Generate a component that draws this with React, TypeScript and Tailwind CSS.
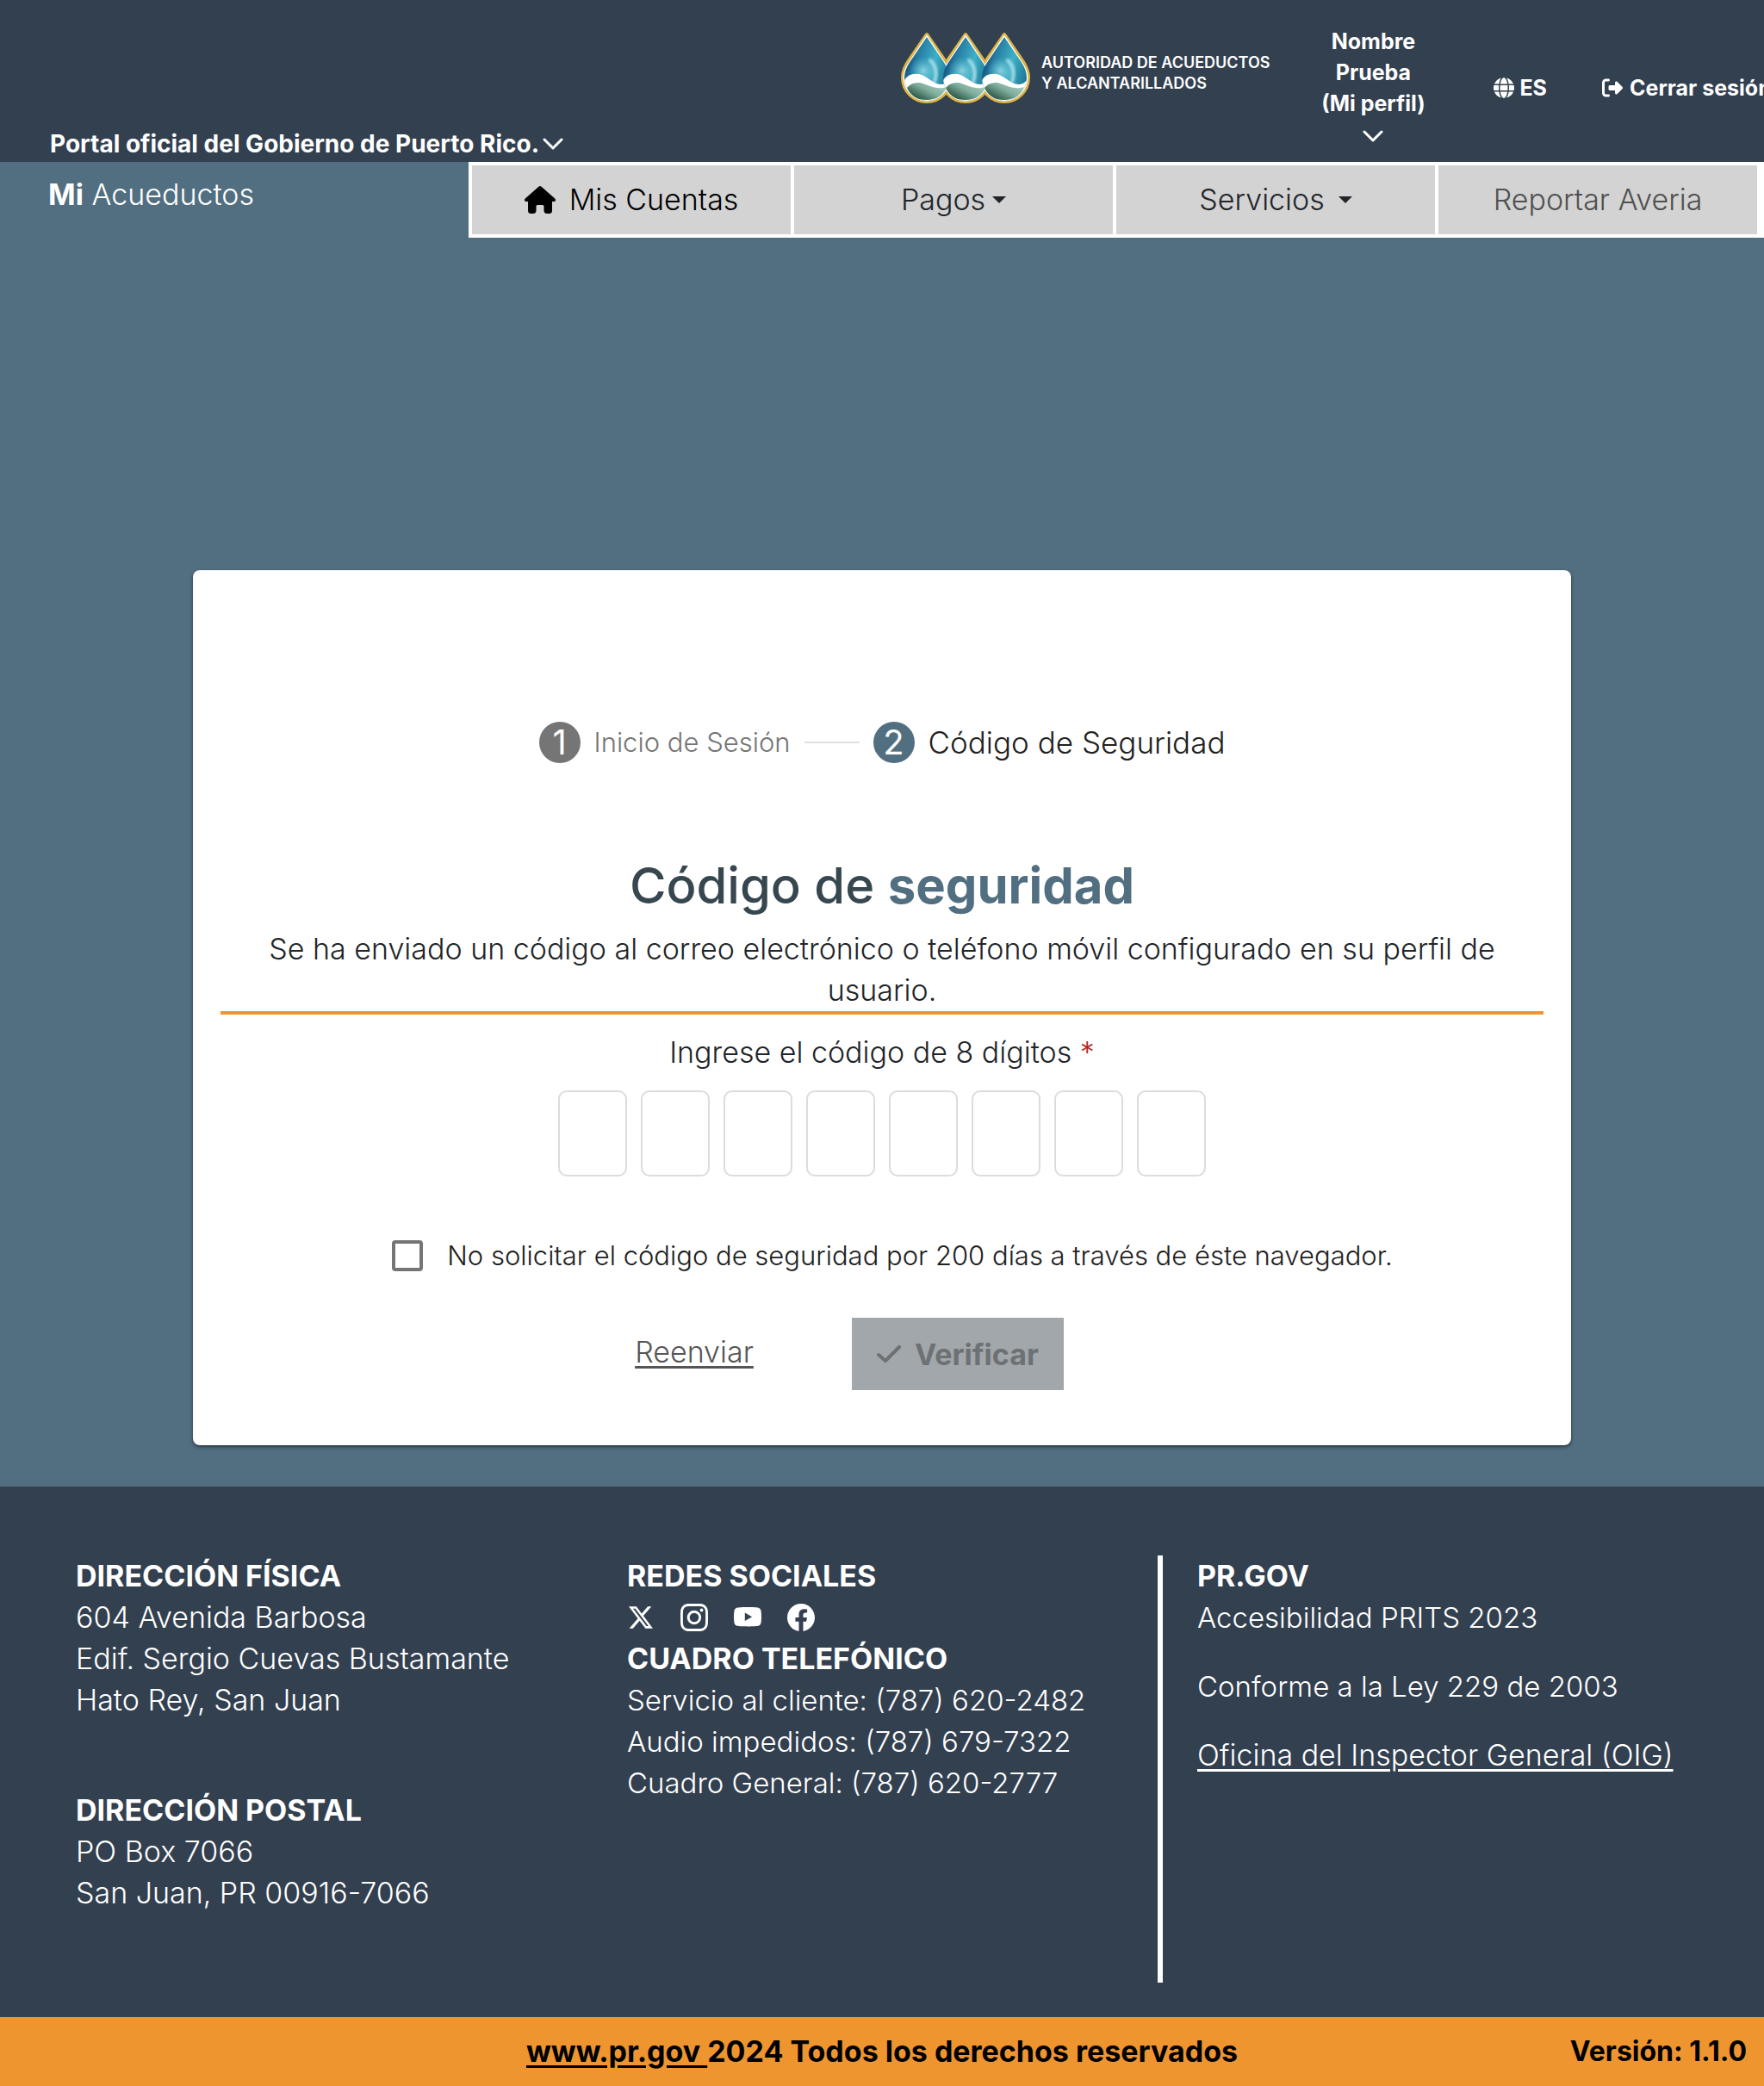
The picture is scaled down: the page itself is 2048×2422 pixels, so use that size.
import { FaGlobe, FaRightFromBracket } from "react-icons/fa6";
import { BsTwitterX, BsInstagram, BsYoutube, BsFacebook } from "react-icons/bs";

const dropOffsets = [0, 45, 90];

function Logo() {
  return (
    <a href="#inicio" className="flex shrink-0 items-center gap-3 text-white">
      <svg viewBox="0 0 152 84" className="h-[84px] w-[152px]" aria-hidden="true">
        <defs>
          <linearGradient id="water" x1="0" x2="1" y1="0" y2="0.4">
            <stop offset="0.15" stopColor="#0b3055" />
            <stop offset="0.38" stopColor="#24789f" />
            <stop offset="0.7" stopColor="#3fb0c8" />
            <stop offset="1" stopColor="#1f7897" />
          </linearGradient>
          <radialGradient id="glow">
            <stop offset="0" stopColor="#93d8e2" stopOpacity="0.9" />
            <stop offset="1" stopColor="#56bdd2" stopOpacity="0" />
          </radialGradient>
          <linearGradient id="earth" x1="0" x2="1" y1="0.8" y2="0">
            <stop offset="0" stopColor="#17432f" />
            <stop offset="0.5" stopColor="#7fae9d" />
            <stop offset="1" stopColor="#b9d6cc" />
          </linearGradient>
          <filter id="soft" x="-50%" y="-50%" width="200%" height="200%">
            <feGaussianBlur stdDeviation="1.5" />
          </filter>
          <clipPath id="drop">
            <path d="M31 6 L50 34 Q57 44 57 53 A26 27 0 0 1 5 53 Q5 44 12 34 Z" />
          </clipPath>
        </defs>
        {dropOffsets.map((x) => (
          <path key={x} transform={`translate(${x})`} d="M31 3 L51 32 Q59 43 59 53 A28 28 0 0 1 3 53 Q3 43 11 32 Z" fill="#fff" stroke="#dcb44a" strokeWidth="4" strokeLinejoin="round" />
        ))}
        {dropOffsets.map((x) => (
          <path key={x} transform={`translate(${x})`} d="M31 4 L50 33 Q58 44 58 53 A27 27 0 0 1 4 53 Q4 44 12 33 Z" fill="#fff" stroke="#fff" strokeWidth="1" strokeLinejoin="round" />
        ))}
        {dropOffsets.map((x) => (
          <g key={x} transform={`translate(${x})`} clipPath="url(#drop)">
            <rect width="62" height="84" fill="url(#water)" />
            <ellipse cx="27" cy="45" rx="16" ry="16" fill="url(#glow)" />
            <path d="M35 33 Q45 42 40 58" fill="none" stroke="#c3ebf0" strokeOpacity="0.8" strokeWidth="4" strokeLinecap="round" filter="url(#soft)" />
            <path d="M4 58 Q9 47 22 49 C32 51 38 61 48 61 Q54 61 58 55 L58 84 L0 84 Z" fill="#fff" />
            <path d="M8 65 Q13 58 23 59 C33 61 41 68 54 64 Q48 79 31 79 Q13 79 8 65 Z" fill="url(#earth)" />
          </g>
        ))}
      </svg>
      <span className="mt-3 text-[18px] leading-6 font-semibold whitespace-nowrap">
        AUTORIDAD DE ACUEDUCTOS
        <br />Y ALCANTARILLADOS
      </span>
    </a>
  );
}

function Caret() {
  return (
    <svg viewBox="0 0 16 8" className="h-2 w-4" aria-hidden="true">
      <path d="M0 0H16L8 8Z" fill="currentColor" />
    </svg>
  );
}

function Chevron() {
  return (
    <svg viewBox="0 0 24 24" className="size-6 shrink-0" fill="none" stroke="currentColor" strokeWidth="3" strokeLinecap="round" strokeLinejoin="round" aria-hidden="true">
      <path d="M2 7 12 17 22 7" />
    </svg>
  );
}

function HomeIcon() {
  return (
    <svg viewBox="0 0 36 32" className="h-8 w-9 shrink-0" fill="currentColor" aria-hidden="true">
      <path d="M16.7 0.6Q18 -0.4 19.3 0.6L35.2 14.6Q36.6 16.2 35.5 17.5Q34.8 18.2 33.6 18H32V28.5Q32 32 28.5 32H26.5Q22.5 32 22.5 28.5V23.5Q22.5 22 21 22H15Q13.5 22 13.5 23.5V28.5Q13.5 32 9.5 32H7.5Q4 32 4 28.5V18H2.4Q1.2 18.2 0.5 17.5Q-0.6 16.2 0.8 14.6Z" />
    </svg>
  );
}

function CheckIcon() {
  return (
    <svg viewBox="0 0 28 20" className="h-5 w-7 shrink-0" fill="none" stroke="currentColor" strokeWidth="4" strokeLinecap="round" strokeLinejoin="round" aria-hidden="true">
      <path d="M2 11 10 18 26 2" />
    </svg>
  );
}

function Header() {
  return (
    <header className="flex h-[188px] overflow-hidden bg-[#33404f] pl-[58px] font-bold text-white">
      <button type="button" className="mt-[149px] flex h-9 items-center gap-1 text-[28px] leading-9 whitespace-nowrap">
        Portal oficial del Gobierno de Puerto Rico.
        <Chevron />
      </button>
      <div className="ml-auto flex items-start">
        <div className="mt-[37px] flex"><Logo /></div>
        <button type="button" className="mt-[30px] ml-[56px] flex w-[128px] flex-col items-center text-[25px] leading-9 whitespace-nowrap">
          <span>Nombre</span>
          <span>Prueba</span>
          <span>(Mi perfil)</span>
          <span className="pt-2"><Chevron /></span>
        </button>
        <button type="button" className="mt-[84px] ml-[76px] flex items-center gap-[6px] text-[25px] leading-9">
          <FaGlobe className="size-6" />
          ES
        </button>
        <button type="button" className="mt-[84px] ml-16 flex w-[188px] items-center gap-2 text-[25px] leading-9 whitespace-nowrap">
          <FaRightFromBracket className="size-6 shrink-0" />
          Cerrar sesión
        </button>
      </div>
    </header>
  );
}

function Nav() {
  return (
    <div className="flex items-start justify-between">
      <a href="#inicio" className="mt-[14px] ml-14 text-[34px] leading-[48px] font-light text-white">
        <strong className="font-bold">Mi</strong> Acueductos
      </a>
      <nav className="grid h-[88px] w-[1504px] grid-cols-4 gap-1 bg-white py-1 pr-2 pl-1 text-[34px] leading-[48px] font-light text-[#212529]">
        <a href="#cuentas" className="flex items-center justify-center gap-4 bg-[#d3d3d3] text-black">
          <HomeIcon />
          Mis Cuentas
        </a>
        <button type="button" className="flex items-center justify-center gap-2 bg-[#d3d3d3]">
          Pagos
          <Caret />
        </button>
        <button type="button" className="flex items-center justify-center gap-4 bg-[#d3d3d3]">
          Servicios
          <Caret />
        </button>
        <a href="#averia" className="flex items-center justify-center bg-[#d3d3d3] text-[#505050]">Reportar Averia</a>
      </nav>
    </div>
  );
}

function Stepper() {
  return (
    <ol className="flex h-12 items-center justify-center">
      <li className="flex items-center gap-4">
        <span className="flex size-12 items-center justify-center rounded-full bg-[#757575] text-[40px] leading-none text-white">1</span>
        <span className="text-[31px] font-light text-[#757575]">Inicio de Sesión</span>
      </li>
      <li aria-hidden="true" className="mx-4 h-[2px] w-16 bg-[#e0e0e0]" />
      <li aria-current="step" className="flex items-center gap-4">
        <span className="flex size-12 items-center justify-center rounded-full bg-[#526f81] text-[40px] leading-none text-white">2</span>
        <span className="text-[35px] font-light text-[#212121]">Código de Seguridad</span>
      </li>
    </ol>
  );
}

function CodeForm() {
  return (
    <form className="flex flex-col items-center" onSubmit={(e) => e.preventDefault()}>
      <fieldset className="mt-5 flex flex-col items-center">
        <legend className="mx-auto text-center text-[34px] leading-[48px] font-light">
          Ingrese el código de 8 dígitos <span className="text-[#b3261e]">*</span>
        </legend>
        <div className="mt-5 flex gap-4">
          {Array.from({ length: 8 }, (_, i) => (
            <input
              key={i}
              type="text"
              inputMode="numeric"
              maxLength={1}
              aria-label={`Dígito ${i + 1}`}
              className="h-[100px] w-20 rounded-[10px] border-2 border-[#dcdcdc] bg-white text-center text-[40px]"
            />
          ))}
        </div>
      </fieldset>
      <label className="mt-[68px] flex items-center gap-7 pl-6 text-[31px] leading-[48px] font-light text-[#212121]">
        <input type="checkbox" className="size-9 shrink-0 appearance-none rounded-[4px] border-4 border-[#757575] bg-white" />
        No solicitar el código de seguridad por 200 días a través de éste navegador.
      </label>
      <div className="mt-12 flex h-[84px] items-center gap-[114px] pr-[76px]">
        <button type="button" className="pb-1 text-[34px] leading-[48px] font-light text-[#555555] underline underline-offset-4">Reenviar</button>
        <button type="submit" disabled className="flex h-[84px] w-[246px] items-center justify-center gap-4 bg-[#a1a7aa] text-[34px] font-bold text-[#6d7174]">
          <CheckIcon />
          Verificar
        </button>
      </div>
    </form>
  );
}

const social = [
  { name: "X", Icon: BsTwitterX, size: "size-7" },
  { name: "Instagram", Icon: BsInstagram, size: "size-8" },
  { name: "YouTube", Icon: BsYoutube, size: "size-8" },
  { name: "Facebook", Icon: BsFacebook, size: "size-8" },
];

function Footer() {
  return (
    <footer className="text-[34px] leading-[48px] font-light">
      <div className="grid grid-cols-[640fr_616fr_704fr] bg-[#33404f] pt-20 pb-10 pl-[88px] text-white">
        <address className="not-italic">
          <h2 className="font-bold">DIRECCIÓN FÍSICA</h2>
          <p>604 Avenida Barbosa</p>
          <p>Edif. Sergio Cuevas Bustamante</p>
          <p>Hato Rey, San Juan</p>
          <h2 className="mt-20 font-bold">DIRECCIÓN POSTAL</h2>
          <p>PO Box 7066</p>
          <p>San Juan, PR 00916-7066</p>
        </address>
        <section>
          <h2 className="font-bold">REDES SOCIALES</h2>
          <ul className="flex h-12 items-center gap-[30px]">
            {social.map(({ name, Icon, size }) => (
              <li key={name}>
                <a href={`#${name}`} aria-label={name} className="flex size-8 items-center justify-center">
                  <Icon className={size} />
                </a>
              </li>
            ))}
          </ul>
          <h2 className="font-bold">CUADRO TELEFÓNICO</h2>
          <div className="text-[33px]/[48px]">
            <p>Servicio al cliente: (787) 620-2482</p>
            <p>Audio impedidos: (787) 679-7322</p>
            <p>Cuadro General: (787) 620-2777</p>
          </div>
        </section>
        <section className="min-h-[496px] border-l-[6px] border-white pl-10">
          <h2 className="font-bold">PR.GOV</h2>
          <div className="text-[33px]/[48px]">
            <p>Accesibilidad PRITS 2023</p>
            <p className="mt-8">Conforme a la Ley 229 de 2003</p>
          </div>
          <a href="#oig" className="mt-8 inline-block underline underline-offset-4">Oficina del Inspector General (OIG)</a>
        </section>
      </div>
      <div className="grid h-20 grid-cols-[1fr_auto_1fr] items-center bg-[#ee952f] px-5 font-bold text-black">
        <p className="col-start-2">
          <a href="#prgov" className="underline underline-offset-4">www.pr.gov </a>
          2024 Todos los derechos reservados
        </p>
        <p className="text-right text-[32px]">Versión: 1.1.0</p>
      </div>
    </footer>
  );
}

export default function App() {
  return (
    <div className="min-h-screen overflow-x-hidden bg-[#526f81] font-['Inter',sans-serif] text-[#212529]">
      <Header />
      <Nav />
      <main className="px-8 pt-[386px] pb-12">
        <div className="mx-auto max-w-[1600px] rounded-lg bg-white px-8 pt-[176px] pb-16 shadow-[0_2px_4px_rgba(0,0,0,0.5)]">
          <Stepper />
          <h1 className="mt-[108px] text-center text-[58px] leading-[68px] font-medium text-[#37474f]">
            Código de <strong className="font-bold text-[#526f81]">seguridad</strong>
          </h1>
          <p className="mt-4 border-b-4 border-[#ee952f] px-8 text-center text-[34px] leading-[48px] font-light">
            Se ha enviado un código al correo electrónico o teléfono móvil configurado en su perfil de usuario.
          </p>
          <CodeForm />
        </div>
      </main>
      <Footer />
    </div>
  );
}
